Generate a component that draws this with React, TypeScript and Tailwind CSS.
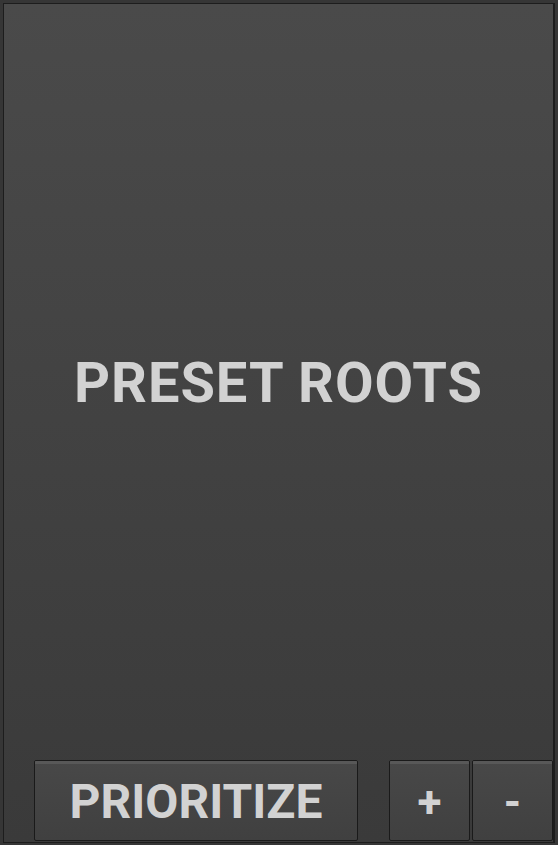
export default function App() {
  return (
    <div className="h-[845px] w-[558px] bg-[#363636] pl-[3px] pr-[3px] pt-[3px] pb-[2px] font-['Roboto',sans-serif]">
      <div className="flex h-full flex-col border border-r-2 border-[#1d1d1d] bg-gradient-to-b from-[#4a4a4a] to-[#3a3a3a]">
        <div className="flex flex-1 items-center justify-center pt-[2px]">
          <h1 className="text-[56px] font-bold leading-none tracking-[1px] text-[#d2d2d2]">PRESET ROOTS</h1>
        </div>
        <div className="flex h-[82px] items-stretch pl-[30px] pb-px">
          <Button label="PRIORITIZE" className="w-[324px] text-[48px]" />
          <div className="w-[31px]" />
          <Button label="+" className="w-[81px] text-[44px]" />
          <div className="w-[2px]" />
          <Button label="-" className="w-[81px] text-[44px]" />
        </div>
      </div>
    </div>
  );
}

function Button({ label, className = "" }: { label: string; className?: string }) {
  return (
    <button
      className={`flex flex-col overflow-hidden rounded-[2px] border border-[#1a1a1a] bg-gradient-to-b from-[#484848] to-[#404040] font-bold text-[#d2d2d2] ${className}`}
    >
      <div className="h-[3px] w-full bg-[#585858]" />
      <div className="flex flex-1 items-center justify-center leading-none">{label}</div>
    </button>
  );
}
